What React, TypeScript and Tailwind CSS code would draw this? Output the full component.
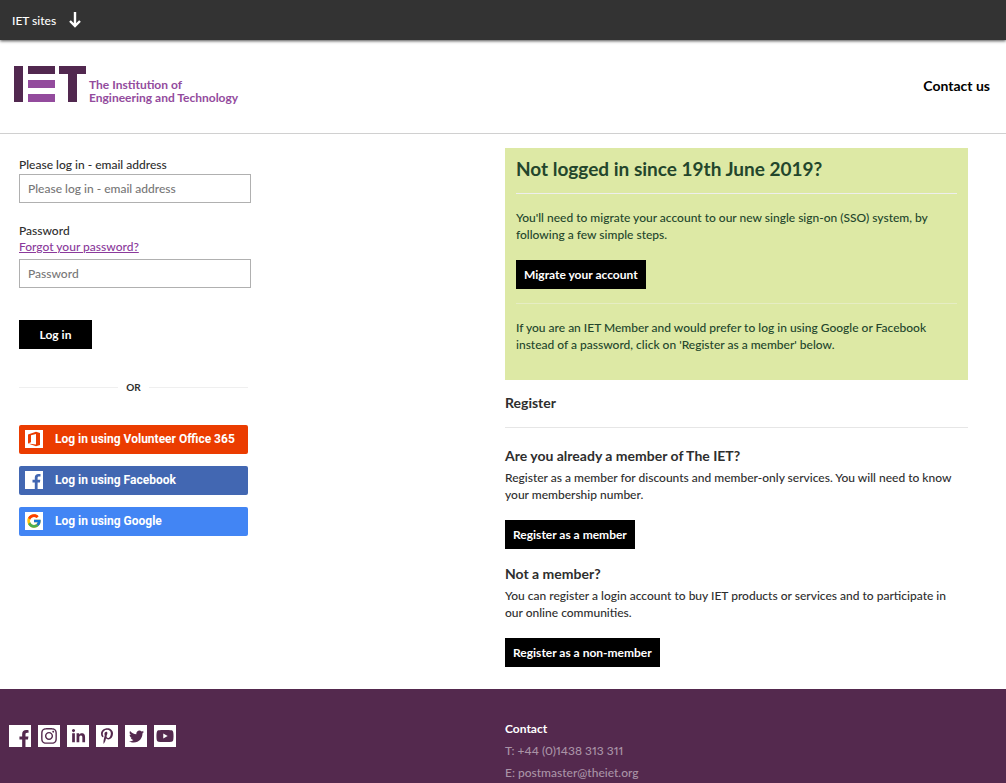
import type { ReactNode } from 'react'
import { FaFacebookF, FaInstagram, FaLinkedinIn, FaPinterestP, FaTwitter, FaYoutube } from 'react-icons/fa'
import { FcGoogle } from 'react-icons/fc'

const socialLinks = [
  { label: 'Instagram', icon: <FaInstagram className="h-[18px] w-[18px]" /> },
  { label: 'LinkedIn', icon: <FaLinkedinIn className="h-[15px] w-[15px]" /> },
  { label: 'Pinterest', icon: <FaPinterestP className="h-4 w-4" /> },
  { label: 'Twitter', icon: <FaTwitter className="h-[15px] w-[15px]" /> },
  { label: 'YouTube', icon: <FaYoutube className="h-[18px] w-[18px]" /> },
]

export default function App() {
  return (
    <div className="flex min-h-screen flex-col bg-white font-['Lato',sans-serif] text-[12px] leading-[17px] font-medium text-[#2e2e2e]">
      {/* Top bar */}
      <div className="relative flex h-10 items-center bg-[#333] px-3 shadow-[0_1px_3px_rgba(0,0,0,0.7)]">
        <button type="button" className="flex items-center gap-3 text-white">
          IET sites
          <ArrowDown />
        </button>
      </div>

      <Header />

      <main className="grid grid-cols-2 gap-x-[23px] pt-[14px] pr-[38px] pb-[22px] pl-[19px]">
        <LoginForm />
        <div>
          <MigrateNotice />
          <Register />
        </div>
      </main>

      <Footer />
    </div>
  )
}

function Header() {
  return (
    <header className="flex items-center justify-between border-b border-[#d0d0d0] pt-[26px] pr-4 pb-[29px] pl-[14px]">
      <a href="#" className="flex items-end gap-[3px]" aria-label="The IET home">
        <svg width="72" height="36" viewBox="0 0 72 36" className="mb-[2px]" aria-hidden="true">
          <path fill="#51284f" d="M0 0h9v36H0zM14 0h27v8H14zM45 0h27v8h-9v28h-9V8h-9z" />
          <path fill="#934b9d" d="M14 14h27v8H14zM14 28h27v8H14z" />
        </svg>
        <span className="leading-[13px] font-bold text-[#934b9d]">
          The Institution of
          <br />
          Engineering and Technology
        </span>
      </a>
      <a href="#" className="text-[14px] font-bold text-black">
        Contact us
      </a>
    </header>
  )
}

function LoginForm() {
  return (
    <div className="pt-[9px]">
      <form onSubmit={(e) => e.preventDefault()}>
        <label htmlFor="email" className="block leading-4">
          Please log in - email address
        </label>
        <input
          id="email"
          type="email"
          placeholder="Please log in - email address"
          className="mt-px block h-[29px] w-[232px] border border-[#b0b0b0] px-2 placeholder:text-[#777]"
        />

        <label htmlFor="password" className="mt-5 block leading-4">
          Password
        </label>
        <a href="#" className="block w-fit leading-[15px] text-[#8b3a9b] underline">
          Forgot your password?
        </a>
        <input
          id="password"
          type="password"
          placeholder="Password"
          className="mt-[5px] block h-[29px] w-[232px] border border-[#b0b0b0] px-2 placeholder:text-[#777]"
        />

        <button type="submit" className="mt-8 h-[29px] w-[73px] bg-black font-bold text-white">
          Log in
        </button>
      </form>

      <div className="mt-[30px] flex w-[229px] items-center gap-2 text-[10px] font-bold">
        <hr className="grow border-[#efefef]" />
        OR
        <hr className="grow border-[#efefef]" />
      </div>

      <div className="mt-[29px] flex w-[229px] flex-col gap-3">
        <ProviderButton className="bg-[#eb3c00]" icon={<OfficeIcon />}>
          Log in using Volunteer Office 365
        </ProviderButton>
        <ProviderButton className="bg-[#4267b2]" icon={<FacebookIcon className="text-[#4267b2]" />}>
          Log in using Facebook
        </ProviderButton>
        <ProviderButton className="bg-[#4285f4]" icon={<FcGoogle className="h-4 w-4" />}>
          Log in using Google
        </ProviderButton>
      </div>
    </div>
  )
}

function ProviderButton({ className, icon, children }: { className: string; icon: ReactNode; children: ReactNode }) {
  return (
    <button
      type="button"
      className={`flex h-[29px] items-center gap-3 rounded-[2px] pb-px pl-[6px] font-['Roboto',sans-serif] font-bold whitespace-nowrap text-white ${className}`}
    >
      <span className="flex h-[18px] w-[18px] items-center justify-center bg-white">{icon}</span>
      {children}
    </button>
  )
}

function MigrateNotice() {
  return (
    <section className="bg-[#dde9a5] px-[11px] pt-[9px] pb-[27px] text-[#23462c]">
      <h2 className="text-[19px] leading-6 font-bold">Not logged in since 19th June 2019?</h2>
      <hr className="mt-3 border-[#eeeeee]" />
      <p className="mt-[15px]">
        You'll need to migrate your account to our new single sign-on (SSO) system, by following a few simple steps.
      </p>
      <ActionButton>Migrate your account</ActionButton>
      <hr className="mt-[14px] border-[#e6edc4]" />
      <p className="mt-[15px]">
        If you are an IET Member and would prefer to log in using Google or Facebook instead of a password, click on
        'Register as a member' below.
      </p>
    </section>
  )
}

function Register() {
  return (
    <section>
      <h2 className="mt-[13px] text-[14px] leading-5 font-bold">Register</h2>
      <hr className="mt-[14px] border-[#e6e6e6]" />
      <h3 className="mt-[18px] text-[14px] leading-5 font-bold">Are you already a member of The IET?</h3>
      <p className="mt-[3px] pr-2">
        Register as a member for discounts and member-only services. You will need to know your membership number.
      </p>
      <ActionButton>Register as a member</ActionButton>
      <h3 className="mt-[15px] text-[14px] leading-5 font-bold">Not a member?</h3>
      <p className="mt-[3px] pr-2">
        You can register a login account to buy IET products or services and to participate in our online communities.
      </p>
      <ActionButton>Register as a non-member</ActionButton>
    </section>
  )
}

function ActionButton({ children }: { children: ReactNode }) {
  return (
    <button type="button" className="mt-[17px] block h-[29px] bg-black px-2 font-bold text-white">
      {children}
    </button>
  )
}

function Footer() {
  return (
    <footer className="grid grow grid-cols-2 gap-x-[23px] bg-[#54294e] pt-[30px] pr-[38px] pl-[19px] text-[#a993a6]">
      <ul className="-ml-[10px] flex gap-[7px] pt-[6px] text-[#54294e]">
        <li>
          <a href="#" aria-label="Facebook" className="flex h-[22px] w-[22px] items-end justify-end bg-white">
            <FaFacebookF className="h-[17px] w-[14px]" />
          </a>
        </li>
        {socialLinks.map((link) => (
          <li key={link.label}>
            <a href="#" aria-label={link.label} className="flex h-[22px] w-[22px] items-center justify-center bg-white">
              {link.icon}
            </a>
          </li>
        ))}
      </ul>
      <div className="flex flex-col gap-[2px] leading-5 proportional-nums">
        <h2 className="font-bold text-white">Contact</h2>
        <p>T: +44 (0)1438 313 311</p>
        <p>
          E: <a href="mailto:postmaster@theiet.org">postmaster@theiet.org</a>
        </p>
      </div>
    </footer>
  )
}

function ArrowDown() {
  return (
    <svg width="14" height="16" viewBox="0 0 14 16" fill="none" stroke="currentColor" strokeWidth="2.4" aria-hidden="true">
      <path d="M7 0v14M2 9l5 5 5-5" />
    </svg>
  )
}

function OfficeIcon() {
  return (
    <svg width="14" height="16" viewBox="0 0 14 16" fill="#eb3c00" aria-hidden="true">
      <path fillRule="evenodd" d="M1 3.6 9 .8l4 1.1v12.2l-4 1.1-8-2.8 8 1V2.9L4 4.2v7L1 12.4z" />
    </svg>
  )
}

function FacebookIcon({ className }: { className: string }) {
  return (
    <svg width="18" height="18" viewBox="0 0 18 18" fill="currentColor" className={className} aria-hidden="true">
      <path d="M9.8 18v-6.6H7.5V8.7h2.3V6.6c0-2.4 1.4-3.7 3.6-3.7.9 0 1.8.1 2.1.2v2.4H14c-1.1 0-1.4.6-1.4 1.4v1.8h2.7l-.4 2.7h-2.3V18z" />
    </svg>
  )
}
